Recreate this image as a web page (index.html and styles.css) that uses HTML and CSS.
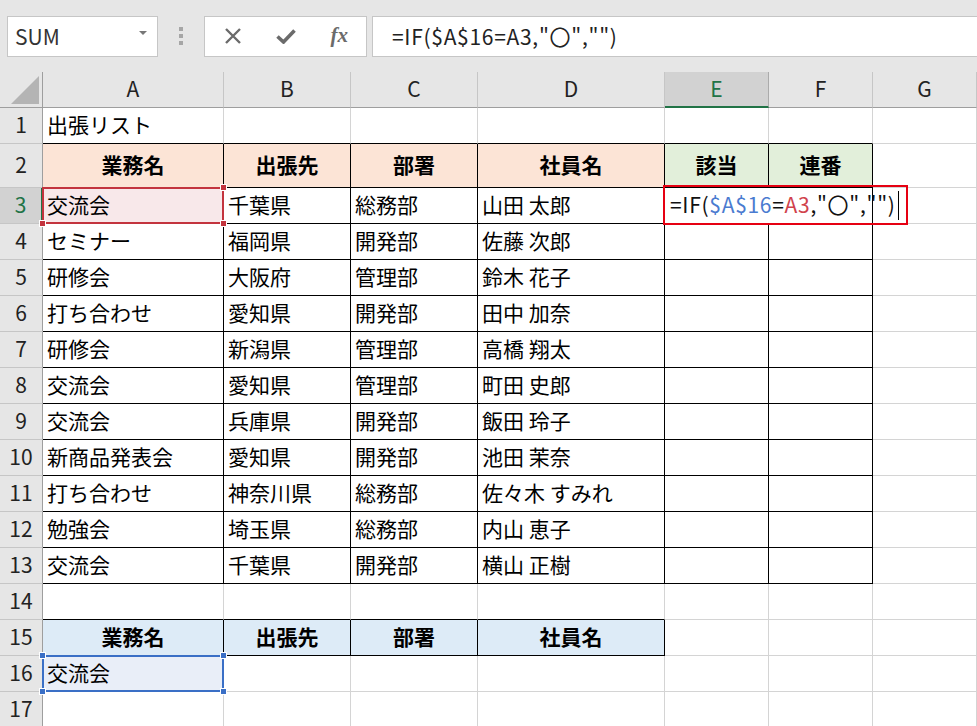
FILE: index.html
```html
<!DOCTYPE html>
<html lang="ja">
<head>
<meta charset="utf-8">
<title>出張リスト</title>
<link rel="stylesheet" href="styles.css">
</head>
<body>
<div class="toolbar">
  <div class="namebox"><span>SUM</span><span class="drop"></span></div>
  <div class="sep"><i></i><i></i><i></i></div>
  <div class="fnbox">
    <span class="ic"><svg width="18" height="16" viewBox="0 0 18 16"><path d="M2 1 L16 15 M16 1 L2 15" stroke="#6b6b6b" stroke-width="2.4" fill="none"/></svg></span>
    <span class="ic"><svg width="20" height="15" viewBox="0 0 20 15"><path d="M1.5 7.5 L7.5 13 L18.5 1.5" stroke="#6b6b6b" stroke-width="3.6" fill="none"/></svg></span>
    <span class="ic fx">fx</span>
  </div>
  <div class="formula">=IF($A$16=A3,"〇","")</div>
</div>

<div class="sheet">
  <div class="corner"><span class="tri"></span></div>
  <div class="ch">A</div><div class="ch">B</div><div class="ch">C</div><div class="ch">D</div><div class="ch sel">E</div><div class="ch">F</div><div class="ch">G</div>

  <div class="rh">1</div>
  <div class="c bb">出張リスト</div><div class="c bb"></div><div class="c bb"></div><div class="c bb"></div><div class="c bb"></div><div class="c bb"></div><div class="c"></div>

  <div class="rh">2</div>
  <div class="c t hd pe">業務名</div><div class="c t hd pe">出張先</div><div class="c t hd pe">部署</div><div class="c t hd pe">社員名</div><div class="c t hd gr">該当</div><div class="c t hd gr">連番</div><div class="c"></div>

  <div class="rh rsel">3</div>
  <div class="c t rel"><div class="rng red"><b class="h tr"></b><b class="h bl"></b><b class="h br"></b></div><span class="txt">交流会</span></div>
  <div class="c t">千葉県</div><div class="c t">総務部</div><div class="c t">山田 太郎</div>
  <div class="c t edit"><span class="etxt">=IF(<span class="ref1">$A$16</span>=<span class="ref2">A3</span>,"〇","")</span><span class="caret"></span><span class="mark"></span></div>
  <div class="c t"></div><div class="c"></div>

  <div class="rh">4</div>
  <div class="c t">セミナー</div><div class="c t">福岡県</div><div class="c t">開発部</div><div class="c t">佐藤 次郎</div><div class="c t"></div><div class="c t"></div><div class="c"></div>
  <div class="rh">5</div>
  <div class="c t">研修会</div><div class="c t">大阪府</div><div class="c t">管理部</div><div class="c t">鈴木 花子</div><div class="c t"></div><div class="c t"></div><div class="c"></div>
  <div class="rh">6</div>
  <div class="c t">打ち合わせ</div><div class="c t">愛知県</div><div class="c t">開発部</div><div class="c t">田中 加奈</div><div class="c t"></div><div class="c t"></div><div class="c"></div>
  <div class="rh">7</div>
  <div class="c t">研修会</div><div class="c t">新潟県</div><div class="c t">管理部</div><div class="c t">高橋 翔太</div><div class="c t"></div><div class="c t"></div><div class="c"></div>
  <div class="rh">8</div>
  <div class="c t">交流会</div><div class="c t">愛知県</div><div class="c t">管理部</div><div class="c t">町田 史郎</div><div class="c t"></div><div class="c t"></div><div class="c"></div>
  <div class="rh">9</div>
  <div class="c t">交流会</div><div class="c t">兵庫県</div><div class="c t">開発部</div><div class="c t">飯田 玲子</div><div class="c t"></div><div class="c t"></div><div class="c"></div>
  <div class="rh">10</div>
  <div class="c t">新商品発表会</div><div class="c t">愛知県</div><div class="c t">開発部</div><div class="c t">池田 茉奈</div><div class="c t"></div><div class="c t"></div><div class="c"></div>
  <div class="rh">11</div>
  <div class="c t">打ち合わせ</div><div class="c t">神奈川県</div><div class="c t">総務部</div><div class="c t">佐々木 すみれ</div><div class="c t"></div><div class="c t"></div><div class="c"></div>
  <div class="rh">12</div>
  <div class="c t">勉強会</div><div class="c t">埼玉県</div><div class="c t">総務部</div><div class="c t">内山 恵子</div><div class="c t"></div><div class="c t"></div><div class="c"></div>
  <div class="rh">13</div>
  <div class="c t">交流会</div><div class="c t">千葉県</div><div class="c t">開発部</div><div class="c t">横山 正樹</div><div class="c t"></div><div class="c t"></div><div class="c"></div>

  <div class="rh">14</div>
  <div class="c bb"></div><div class="c bb"></div><div class="c bb"></div><div class="c bb"></div><div class="c"></div><div class="c"></div><div class="c"></div>

  <div class="rh">15</div>
  <div class="c t hd bl2">業務名</div><div class="c t hd bl2">出張先</div><div class="c t hd bl2">部署</div><div class="c t hd bl2">社員名</div><div class="c"></div><div class="c"></div><div class="c"></div>

  <div class="rh">16</div>
  <div class="c rel"><div class="rng blue"><b class="h tl"></b><b class="h tr"></b><b class="h bl"></b><b class="h br"></b></div><span class="txt">交流会</span></div>
  <div class="c"></div><div class="c"></div><div class="c"></div><div class="c"></div><div class="c"></div><div class="c"></div>

  <div class="rh">17</div>
  <div class="c"></div><div class="c"></div><div class="c"></div><div class="c"></div><div class="c"></div><div class="c"></div><div class="c"></div>
</div>
</body>
</html>
```

FILE: styles.css
```css
* { box-sizing: border-box; }
html, body { margin: 0; padding: 0; }
body {
  width: 977px;
  height: 726px;
  overflow: hidden;
  background: #e6e6e6;
  font-family: "Noto Sans CJK JP", "Noto Sans", sans-serif;
  color: #000;
}

/* ---------- toolbar ---------- */
.toolbar {
  height: 72px;
  display: flex;
  align-items: center;
  padding-left: 7px;
}
.namebox {
  width: 151px;
  height: 41px;
  background: #fff;
  border: 1px solid #c6c6c6;
  display: flex;
  align-items: center;
  justify-content: space-between;
  padding: 0 10px 0 7px;
  font-size: 21px;
  color: #333;
}
.drop {
  width: 0; height: 0;
  border-left: 4px solid transparent;
  border-right: 4px solid transparent;
  border-top: 4px solid #777;
  margin-bottom: 6px;
}
.sep {
  width: 46px;
  display: flex;
  flex-direction: column;
  align-items: center;
  gap: 3px;
}
.sep i { display: block; width: 4px; height: 4px; background: #a6a6a6; }
.fnbox {
  width: 163px;
  height: 41px;
  background: #fff;
  border: 1px solid #c6c6c6;
  display: flex;
  align-items: center;
  padding-left: 1px;
}
.ic {
  width: 54px;
  display: flex;
  justify-content: center;
  align-items: center;
}
.fx {
  font-family: "Liberation Serif", "DejaVu Serif", serif;
  font-style: italic;
  font-weight: bold;
  font-size: 21px;
  color: #6b6b6b;
  padding-bottom: 2px;
}
.formula {
  flex: 1;
  height: 41px;
  margin-left: 5px;
  margin-right: -4px;
  background: #fff;
  border: 1px solid #c6c6c6;
  display: flex;
  align-items: center;
  padding-left: 19px;
  font-size: 21px;
  letter-spacing: 0.7px;
  color: #222;
}

/* ---------- sheet ---------- */
.sheet {
  display: grid;
  grid-template-columns: 43px 181px 127px 127px 187px 104px 104px 1fr;
  grid-template-rows: 36px 36px 44px repeat(15, 36px);
  background: #fff;
}
.corner {
  background: #e6e6e6;
  border-right: 1px solid #9e9e9e;
  border-bottom: 1px solid #9e9e9e;
  position: relative;
}
.tri {
  position: absolute;
  right: 3px;
  bottom: 3px;
  width: 0; height: 0;
  border-left: 28px solid transparent;
  border-bottom: 28px solid #b4b4b4;
}
.ch {
  background: #e6e6e6;
  border-right: 1px solid #c6c6c6;
  border-bottom: 1px solid #9e9e9e;
  display: flex;
  align-items: center;
  justify-content: center;
  padding-bottom: 3px;
  font-size: 21px;
  color: #222;
}
.ch.sel {
  background: #d2d2d2;
  color: #217346;
  border-bottom: 2px solid #217346;
  border-right-color: #ababab;
}
.rh {
  background: #e6e6e6;
  border-right: 1px solid #9e9e9e;
  border-bottom: 1px solid #c6c6c6;
  display: flex;
  align-items: center;
  justify-content: center;
  padding-bottom: 3px;
  font-size: 21px;
  color: #222;
}
.rh.rsel {
  background: #d2d2d2;
  color: #217346;
  border-right: 2px solid #217346;
}

.c {
  border-right: 1px solid #d4d4d4;
  border-bottom: 1px solid #d4d4d4;
  display: flex;
  align-items: center;
  padding-left: 4px;
  padding-bottom: 3px;
  font-size: 21px;
  white-space: nowrap;
}
.c.bb { border-bottom-color: #000; }
.c.t { border-right-color: #000; border-bottom-color: #000; }
.c.hd {
  font-weight: bold;
  justify-content: center;
  padding-left: 0;
}
.pe { background: #fce4d6; }
.gr { background: #e2efda; }
.bl2 { background: #ddebf7; }

/* selection ranges */
.rel { position: relative; }
.txt { position: relative; z-index: 1; }
.rng {
  position: absolute;
  left: -1px;
  top: -1px;
  width: calc(100% + 2px);
  height: calc(100% + 2px);
  border: 2px solid;
}
.rng.red { border-color: #c3343e; background: #f8e8ea; }
.rng.blue { border-color: #3a6fc6; background: #e9eef8; }
.h {
  position: absolute;
  width: 7px;
  height: 7px;
  border: 1px solid #fff;
}
.red .h { background: #c3343e; }
.blue .h { background: #3a6fc6; }
.h.tl { left: -5px; top: -5px; }
.h.tr { right: -5px; top: -5px; }
.h.bl { left: -5px; bottom: -5px; }
.h.br { right: -5px; bottom: -5px; }

/* editing cell */
.c.edit {
  position: relative;
  overflow: visible;
  border-right-color: #fff;
  padding-left: 5px;
  z-index: 2;
}
.etxt {
  position: relative;
  z-index: 1;
  color: #111;
  letter-spacing: 0.7px;
}
.ref1 { color: #4a7bd0; }
.ref2 { color: #d0424c; }
.caret {
  display: block;
  flex: none;
  width: 1px;
  height: 29px;
  margin-left: 2px;
  margin-top: 3px;
  background: #000;
}
.mark {
  position: absolute;
  left: -2px;
  top: -3px;
  width: 245px;
  height: 40px;
  border: 2px solid #e60012;
  pointer-events: none;
}
```
